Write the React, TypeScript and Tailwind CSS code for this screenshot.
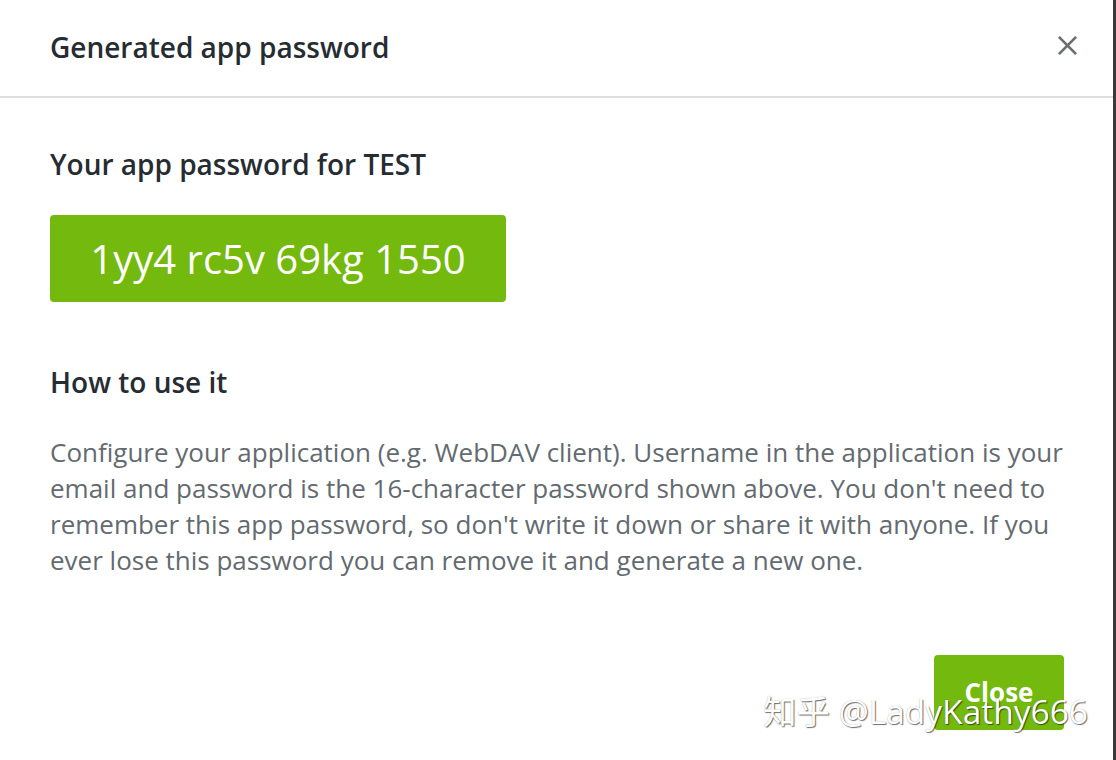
import React from "react";

export default function App() {
  return (
    <div
      className="relative h-[760px] w-[1116px] overflow-hidden bg-white border-r-[3px] border-[#3a3a3a]"
      style={{ fontFamily: '"Open Sans", "Noto Sans CJK SC", sans-serif' }}
    >
      <div className="flex h-[98px] items-center justify-between border-b-2 border-[#dcdedf] pl-[50px] pr-[31px]">
        <h1 className="text-[28px] font-semibold text-[#262c31] pb-[3px]">Generated app password</h1>
        <button className="flex h-[30px] w-[30px] items-center justify-center text-[#6b6e71] mb-[5px]">
          <svg width="21" height="21" viewBox="0 0 22 22" fill="none" stroke="currentColor" strokeWidth="2.8" strokeLinecap="butt">
            <path d="M2 2 L20 20 M20 2 L2 20" />
          </svg>
        </button>
      </div>
      <div className="pl-[50px] pr-[49px] pt-[46px]">
        <h2 className="text-[28px] font-semibold leading-[40px] text-[#262c31]">Your app password for TEST</h2>
        <div className="mt-[31px] flex h-[87px] w-[456px] items-center justify-center rounded-[4px] bg-[#74b90e] text-[40px] text-white">
          1yy4 rc5v 69kg 1550
        </div>
        <h2 className="mt-[60px] text-[28px] font-semibold leading-[40px] text-[#262c31]">How to use it</h2>
        <p className="mt-[32px] text-[26px] leading-[36px] text-[#636a70]">
          Configure your application (e.g. WebDAV client). Username in the application is your email and password is the 16-character password shown above. You don't need to remember this app password, so don't write it down or share it with anyone. If you ever lose this password you can remove it and generate a new one.
        </p>
        <div className="mt-[77px] flex justify-end">
          <button className="h-[75px] w-[130px] rounded-[4px] bg-[#74b90e] text-[26px] font-bold text-white">Close</button>
        </div>
      </div>
      <div className="pointer-events-none absolute left-[763px] top-[686px] whitespace-nowrap text-[33.5px] text-white [text-shadow:1px_1px_1px_rgba(0,0,0,0.55),0_0_1px_rgba(0,0,0,0.35)]">
        知乎 @LadyKathy666
      </div>
    </div>
  );
}
